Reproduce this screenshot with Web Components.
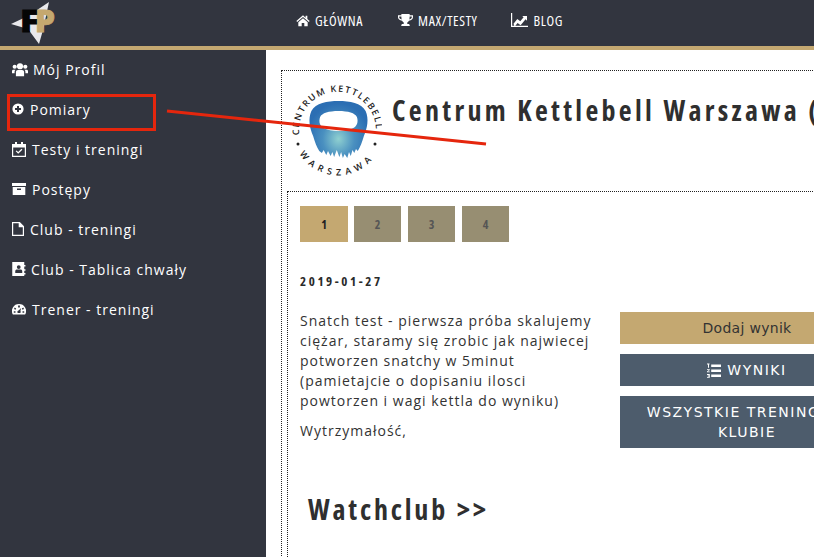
<!DOCTYPE html>
<html lang="pl">
<head>
<meta charset="utf-8">
<title>Centrum Kettlebell</title>
<style>
html, body { margin: 0; height: 100%; overflow: hidden; background: #fff; }
body { font-family: "Open Sans", "Liberation Sans", sans-serif; }
</style>
</head>
<body>
<fp-app>
  <fp-nav-item slot="nav" icon="home" gap="5">GŁÓWNA</fp-nav-item>
  <fp-nav-item slot="nav" icon="trophy" gap="5" style="margin-right: -2px">MAX/TESTY</fp-nav-item>
  <fp-nav-item slot="nav" icon="chart" gap="6">BLOG</fp-nav-item>

  <fp-side-item slot="side" icon="users" gap="5">Mój Profil</fp-side-item>
  <fp-side-item slot="side" icon="plus" gap="6">Pomiary</fp-side-item>
  <fp-side-item slot="side" icon="calendar" gap="6">Testy i treningi</fp-side-item>
  <fp-side-item slot="side" icon="archive" gap="6">Postępy</fp-side-item>
  <fp-side-item slot="side" icon="file" gap="6">Club - treningi</fp-side-item>
  <fp-side-item slot="side" icon="contact" gap="5">Club - Tablica chwały</fp-side-item>
  <fp-side-item slot="side" icon="gauge" gap="6">Trener - treningi</fp-side-item>

  <fp-club-page>
    <span slot="title">Centrum Kettlebell Warszawa (Warszawa)</span>
    <fp-pager></fp-pager>
    <fp-training date="2019-01-27">
      <p>Snatch test - pierwsza próba skalujemy ciężar, staramy się zrobic jak najwiecej potworzen snatchy w 5minut (pamietajcie o dopisaniu ilosci powtorzen i wagi kettla do wyniku)</p>
      <p>Wytrzymałość,</p>
      <fp-button slot="actions" kind="gold">Dodaj wynik</fp-button>
      <fp-button slot="actions" icon="list">WYNIKI</fp-button>
      <fp-button slot="actions">WSZYSTKIE TRENINGI W KLUBIE</fp-button>
    </fp-training>
    <span slot="footer">Watchclub &gt;&gt;</span>
  </fp-club-page>
</fp-app>

<script>
const ICONS = {
  home: '<path d="M8 1.500 .3 8.200l1 1.100L8 3.600l6.700 5.700 1-1.100-2.700-2.300V2h-2v2.200z"/><path d="M8 4.800 2.600 9.400V14h3.900v-3.600h3V14h3.900V9.400z"/>',
  trophy: '<path fill-rule="evenodd" d="M3.600 1h8.800v1.400H16v2.200c0 2-1.700 3.500-4.300 3.700-.5.800-1.100 1.300-1.800 1.700v1.800h1.200c.8 0 1.400.6 1.400 1.400v.6H3.500v-.6c0-.8.6-1.400 1.400-1.400h1.200V10c-.7-.4-1.300-.9-1.800-1.700C1.700 8.100 0 6.600 0 4.600V2.400h3.600zM1.300 3.700v.9c0 1 .9 2 2.600 2.300-.2-.9-.3-2-.3-3.200zm13.400 0h-2.300c0 1.200-.1 2.300-.3 3.200 1.700-.3 2.600-1.300 2.600-2.300z"/>',
  chart: '<path d="M0 1h1.200v12.800H17V15H0z"/><path d="M2.500 11.800 6.300 7l3 2.300 3.300-4-1.400-1.400H16v4.800l-1.400-1.400-5 6-3-2.300-3 3.800z"/>',
  users: '<circle cx="8" cy="4" r="3.100"/><circle cx="2.700" cy="4.500" r="2.100"/><circle cx="13.300" cy="4.500" r="2.100"/><path d="M3.900 14V9.800c0-1.300 1-2.100 2-2.100h4.200c1 0 2 .8 2 2.100V14z"/><path d="M0 11V8.800c0-.7.6-1.300 1.300-1.300h2.200c-.6.600-.9 1.300-.9 2.100V11zM16 11V8.800c0-.7-.6-1.300-1.300-1.300h-2.200c.6.600.9 1.300.9 2.100V11z"/>',
  plus: '<path fill-rule="evenodd" d="M6 .4a5.600 5.600 0 1 1 0 11.200A5.600 5.600 0 0 1 6 .4zM5 3v2H3v2h2v2h2V7h2V5H7V3z"/>',
  calendar: '<path fill-rule="evenodd" d="M3 0h2v2h4V0h2v2h3v13H0V2h3zM1.200 5.500v8.300h11.600V5.500z"/><path d="m3.700 9.300.9-.9 1.600 1.600 3.300-3.200.9.900-4.200 4.100z"/>',
  archive: '<path fill-rule="evenodd" d="M0 1h14v3H0zM.7 5h12.600v8H.7zM5 6.500V8h4V6.500z"/>',
  file: '<path fill-rule="evenodd" d="M0 0h7.800L12 4.200V14H0zm1.200 1.200v11.600h9.600V5.300H6.700V1.200z"/>',
  contact: '<path fill-rule="evenodd" d="M0 0h12v3h1.200v1.500H12v2.700h1.200v1.500H12V11h1.200v1.500H12V14H0zm6.500 3.200a1.900 1.900 0 1 0 0 3.800 1.900 1.900 0 0 0 0-3.800zM3 11h7V9.300c0-1-.8-1.700-1.700-1.700H4.700C3.800 7.600 3 8.300 3 9.300z"/>',
  gauge: '<path fill-rule="evenodd" d="M7 2a7 7 0 0 1 6.100 10.500H.9A7 7 0 0 1 7 2zM6.100 3.600v1.800h1.800V3.600zM2.700 5.600 2 6.900l1.500.8.700-1.300zm8.600 0-1.500.8.700 1.300 1.500-.8zM9.100 6 6.700 8.600c-.7 0-1.300.6-1.300 1.300 0 .4.100.8.400 1h2.400c.3-.2.500-.6.500-1 0-.4-.1-.7-.3-.9zM1.800 9.200v1.600h1.700V9.200zm8.700 0v1.600h1.700V9.200z"/>',
  list: '<path d="M0 .5h2.500v1H2v3.200H1V1.500H0zM0 6.200h2.800V7L1 8.500h1.800v.8H0v-.8l1.800-1.500H0zM0 11h2.800v3.800H0V14h1.800v-.6H.7v-.8h1.100V12H0z"/><path d="M4.200 1.500h9.800v2.500H4.200zM4.200 6.500h9.800V9H4.200zM4.200 11.500h9.800V14H4.200z"/>'
}

const VIEWBOX = {
  home: '0 0 16 15', trophy: '0 0 16 16', chart: '0 0 17 16', users: '0 0 16 14.500', plus: '0 0 12 12',
  calendar: '0 0 14 15', archive: '0 0 14 14', file: '0 0 12 14', contact: '0 0 13.500 14', gauge: '0 0 14 14', list: '0 0 14 15'
}

const ICON_SIZE = {
  home: [14, 13], trophy: [15, 15], chart: [17, 16], users: [16, 15], plus: [12, 12],
  calendar: [14, 15], archive: [14, 14], file: [12, 14], contact: [14, 14], gauge: [14, 14], list: [14, 15]
}

customElements.define('fp-icon', class extends HTMLElement {
  connectedCallback() {
    const name = this.getAttribute('name')
    const [w, h] = ICON_SIZE[name]
    this.attachShadow({ mode: 'open' }).innerHTML = `
    <style>
    :host { display: inline-flex; flex: none; }
    svg { display: block; fill: currentColor; }
    </style>
    <svg width="${w}" height="${h}" viewBox="${VIEWBOX[name]}">${ICONS[name]}</svg>
    `
  }
})

customElements.define('fp-logo', class extends HTMLElement {
  constructor() {
    super()
    this.attachShadow({ mode: 'open' }).innerHTML = `
    <style>
    :host { display: block; width: 60px; height: 46px; }
    svg { display: block; }
    text { font-family: "Open Sans", sans-serif; font-weight: 800; font-size: 30px; stroke-width: .8px; }
    </style>
    <svg width="60" height="46" viewBox="0 0 60 46">
      <polygon points="11,24 28,16 49,2 43,30 39,44 28,29" fill="#e9e9ec"/>
      <text x="20" y="32" fill="#050505" stroke="#050505" textLength="19" lengthAdjust="spacingAndGlyphs">F</text>
      <text x="35" y="32" fill="#c5a86f" stroke="#c5a86f" textLength="20" lengthAdjust="spacingAndGlyphs">P</text>
    </svg>
    `
  }
})

customElements.define('fp-nav-item', class extends HTMLElement {
  constructor() {
    super()
    const gap = this.getAttribute('gap') || 6
    this.attachShadow({ mode: 'open' }).innerHTML = `
    <style>
    :host {
      display: flex;
      align-items: center;
      gap: ${gap}px;
      color: #fff;
      font-size: 14px;
      font-stretch: 75%;
      letter-spacing: .6px;
    }
    </style>
    <fp-icon name="${this.getAttribute('icon')}"></fp-icon>
    <slot></slot>
    `
  }
})

customElements.define('fp-side-item', class extends HTMLElement {
  constructor() {
    super()
    const gap = this.getAttribute('gap') || 6
    this.attachShadow({ mode: 'open' }).innerHTML = `
    <style>
    :host {
      display: flex;
      align-items: center;
      gap: ${gap}px;
      box-sizing: border-box;
      height: 40px;
      padding: 0 0 2px 12px;
      color: #fff;
      font-size: 14px;
      letter-spacing: 1px;
    }
    </style>
    <fp-icon name="${this.getAttribute('icon')}"></fp-icon>
    <slot></slot>
    `
  }
})

customElements.define('fp-pager', class extends HTMLElement {
  constructor() {
    super()
    this.attachShadow({ mode: 'open' }).innerHTML = `
    <style>
    :host { display: flex; gap: 7px; }
    span {
      display: flex;
      align-items: center;
      justify-content: center;
      width: 47px;
      height: 36px;
      background: #978e72;
      color: #555;
      font-size: 12px;
      font-weight: 700;
      font-stretch: 87%;
    }
    span.on { width: 48px; margin-right: -1px; background: #c4a871; color: #222; }
    </style>
    <span class="on">1</span><span>2</span><span>3</span><span>4</span>
    `
  }
})

customElements.define('fp-button', class extends HTMLElement {
  constructor() {
    super()
    const icon = this.getAttribute('icon')
    this.attachShadow({ mode: 'open' }).innerHTML = `
    <style>
    :host {
      display: flex;
      align-items: center;
      justify-content: center;
      gap: 6px;
      box-sizing: border-box;
      width: 254px;
      padding: 6px 20px;
      background: #4d5c6c;
      color: #fff;
      font-family: "DejaVu Sans", sans-serif;
      font-size: 14px;
      line-height: 20px;
      letter-spacing: 1.500px;
      text-align: center;
    }
    :host([kind=gold]) { background: #c4a871; color: #333; letter-spacing: .3px; }
    </style>
    ${icon ? `<fp-icon name="${icon}"></fp-icon>` : ''}
    <span><slot></slot></span>
    `
  }
})

customElements.define('fp-training', class extends HTMLElement {
  constructor() {
    super()
    this.attachShadow({ mode: 'open' }).innerHTML = `
    <style>
    :host { display: block; color: #333; }
    .date { margin: 31px 0 0; font-size: 13px; font-weight: 700; font-stretch: 75%; letter-spacing: 2.600px; line-height: 16px; color: #2a2a2a; }
    .row { display: flex; gap: 28px; margin-top: 22px; }
    .text { width: 292px; flex: none; font-size: 14px; line-height: 20px; letter-spacing: 1px; }
    .actions { display: flex; flex-direction: column; gap: 10px; margin-top: 1px; }
    ::slotted(p) { margin: 0 0 10px; }
    </style>
    <div class="date">${this.getAttribute('date')}</div>
    <div class="row">
      <div class="text"><slot></slot></div>
      <div class="actions"><slot name="actions"></slot></div>
    </div>
    `
  }
})

customElements.define('fp-club-logo', class extends HTMLElement {
  constructor() {
    super()
    this.attachShadow({ mode: 'open' }).innerHTML = `
    <style>
    :host { display: block; width: 95px; height: 98px; flex: none; }
    svg { display: block; }
    text { font-family: "Open Sans", sans-serif; font-size: 9px; font-weight: 600; fill: #222; }
    </style>
    <svg width="95" height="98" viewBox="0 0 95 98">
      <defs>
        <radialGradient id="kb" gradientUnits="userSpaceOnUse" cx="53" cy="57" r="36">
          <stop offset="0" stop-color="#8fd0d0"/><stop offset=".5" stop-color="#4a90c0"/><stop offset="1" stop-color="#2b6eb3"/>
        </radialGradient>
        <path id="top" d="M12.300 53A38.500 38.500 0 1 1 89 47.500"/>
        <path id="bottom" d="M11 69A45 45 0 0 0 91 69"/>
      </defs>
      <path transform="translate(51.500 0) scale(.875 1) translate(-53 0)" fill="url(#kb)" fill-rule="evenodd" d="M53 19C66 19 79 21 84 29C88 37 86 46 82 54C80 60 78 65 75 69L73 67 71 71 69 68 67 74 65 70 63 76 60 72 58 76 56 70 54 75 51 68 48 75 46 70 44 74 41 69 39 73 36 68 34 71 31 69C28 65 26 60 24 54C20 46 18 37 22 29C27 21 40 19 53 19ZM53 29C42 29 34 31 32 35C30 40 32 44 36 46C40 48 46 49 53 49C60 49 66 48 70 46C74 44 76 40 74 35C72 31 64 29 53 29Z"/>
      <text><textPath href="#top" textLength="124">CENTRUM KETTLEBELL</textPath></text>
      <text><textPath href="#bottom" startOffset="3" textLength="84">WARSZAWA</textPath></text>
      <circle cx="11" cy="62" r="1.500" fill="#222"/>
      <circle cx="88" cy="62" r="1.500" fill="#222"/>
    </svg>
    `
  }
})

customElements.define('fp-club-page', class extends HTMLElement {
  constructor() {
    super()
    this.attachShadow({ mode: 'open' }).innerHTML = `
    <style>
    :host {
      display: block;
      box-sizing: border-box;
      width: 700px;
      margin: 20px 0 0 15px;
      border: 1px dotted #222;
      border-right: 0;
      padding: 0 0 0 5px;
    }
    .head { display: flex; align-items: flex-start; gap: 10px; height: 120px; padding-top: 11px; box-sizing: border-box; }
    .title, .foot {
      font-size: 28px;
      font-weight: 700;
      font-stretch: 75%;
      color: #2f2f2f;
      white-space: nowrap;
    }
    .title { line-height: 38px; margin-top: 9px; letter-spacing: 3.300px; }
    .box { border: 1px dotted #222; border-right: 0; min-height: 420px; padding: 14px 0 0 12px; }
    .foot { margin: 38px 0 0 8px; line-height: 40px; letter-spacing: 2.800px; word-spacing: 1px; }
    </style>
    <div class="head">
      <fp-club-logo></fp-club-logo>
      <div class="title"><slot name="title"></slot></div>
    </div>
    <div class="box">
      <slot></slot>
      <div class="foot"><slot name="footer"></slot></div>
    </div>
    `
  }
})

customElements.define('fp-app', class extends HTMLElement {
  constructor() {
    super()
    this.attachShadow({ mode: 'open' }).innerHTML = `
    <style>
    :host {
      display: grid;
      grid-template-columns: 266px 1fr;
      grid-template-rows: 50px 1fr;
      width: 814px;
      height: 557px;
      overflow: hidden;
      position: relative;
    }
    header {
      grid-column: 1 / 3;
      display: flex;
      box-sizing: border-box;
      border-bottom: 4px solid #c4a871;
      background: #32353f;
    }
    nav { display: flex; gap: 35px; margin-left: 236px; padding-bottom: 6px; }
    aside { background: #32353f; }
    main { overflow: hidden; }
    .marks { position: absolute; inset: 0; pointer-events: none; }
    </style>
    <header>
      <fp-logo></fp-logo>
      <nav><slot name="nav"></slot></nav>
    </header>
    <aside><slot name="side"></slot></aside>
    <main><slot></slot></main>
    <svg class="marks" width="814" height="557">
      <rect x="8.500" y="95.500" width="146" height="34" fill="none" stroke="#e5260d" stroke-width="3"/>
      <line x1="167" y1="111" x2="486" y2="144" stroke="#e5260d" stroke-width="3"/>
    </svg>
    `
  }
})
</script>
</body>
</html>
